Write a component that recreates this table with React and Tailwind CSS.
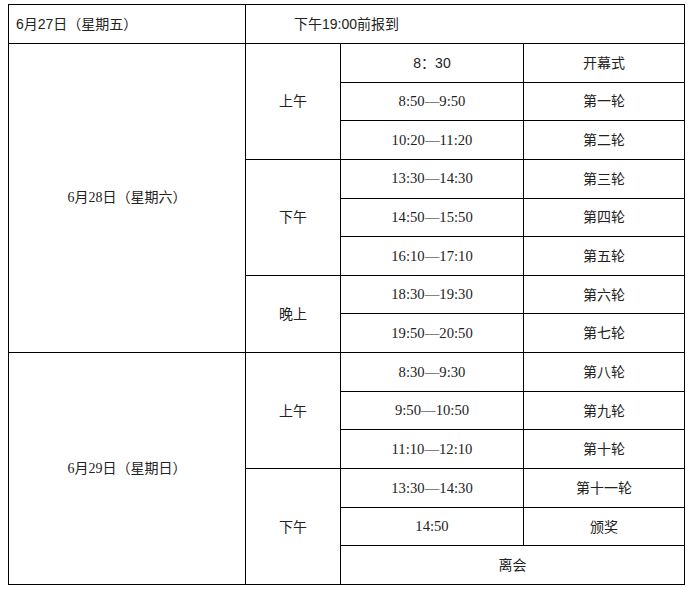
import React from "react";

const rows = [
  ["8：30", "开幕式", true],
  ["8:50—9:50", "第一轮"],
  ["10:20—11:20", "第二轮"],
  ["13:30—14:30", "第三轮"],
  ["14:50—15:50", "第四轮"],
  ["16:10—17:10", "第五轮"],
  ["18:30—19:30", "第六轮"],
  ["19:50—20:50", "第七轮"],
  ["8:30—9:30", "第八轮"],
  ["9:50—10:50", "第九轮"],
  ["11:10—12:10", "第十轮"],
  ["13:30—14:30", "第十一轮"],
  ["14:50", "颁奖"],
];

const rowStart = [
  "row-start-2", "row-start-3", "row-start-4", "row-start-5", "row-start-6",
  "row-start-7", "row-start-8", "row-start-9", "row-start-10", "row-start-11",
  "row-start-12", "row-start-13", "row-start-14", "row-start-15",
];

const cell = "bg-white flex items-center justify-center";
const serif = { fontFamily: '"Liberation Serif", "Noto Sans CJK SC", serif' };

export default function App() {
  return (
    <div className="min-h-[590px] w-[693px] bg-white pt-[4px] pl-[8px]" style={{ fontFamily: '"Liberation Sans", "Noto Sans CJK SC", sans-serif' }}>
      <div className="grid w-[677px] h-[581px] bg-black gap-px p-px grid-cols-[236px_94px_182px_160px] grid-rows-[38px_repeat(14,minmax(0,1fr))] text-[14px] text-[#222] leading-none">
        <div className="bg-white flex items-center pl-[7px] col-start-1 row-start-1">6月27日（星期五）</div>
        <div className="bg-white flex items-center pl-[48px] col-start-2 col-span-3 row-start-1">下午19:00前报到</div>

        <div className={`${cell} col-start-1 row-start-2 row-span-8`} style={serif}>6月28日（星期六）</div>
        <div className={`${cell} col-start-1 row-start-10 row-span-6`} style={serif}>6月29日（星期日）</div>

        <div className={`${cell} col-start-2 row-start-2 row-span-3`}>上午</div>
        <div className={`${cell} col-start-2 row-start-5 row-span-3`}>下午</div>
        <div className={`${cell} col-start-2 row-start-8 row-span-2`}>晚上</div>
        <div className={`${cell} col-start-2 row-start-10 row-span-3`}>上午</div>
        <div className={`${cell} col-start-2 row-start-13 row-span-3`}>下午</div>

        {rows.map((r, i) => (
          <React.Fragment key={i}>
            <div className={`${cell} col-start-3 ${rowStart[i]} ${r[2] ? "" : "text-[14.67px]"}`} style={r[2] ? undefined : serif}>{r[0]}</div>
            <div className={`${cell} col-start-4 ${rowStart[i]}`}>{r[1]}</div>
          </React.Fragment>
        ))}
        <div className={`${cell} col-start-3 col-span-2 row-start-15`}>离会</div>
      </div>
    </div>
  );
}
